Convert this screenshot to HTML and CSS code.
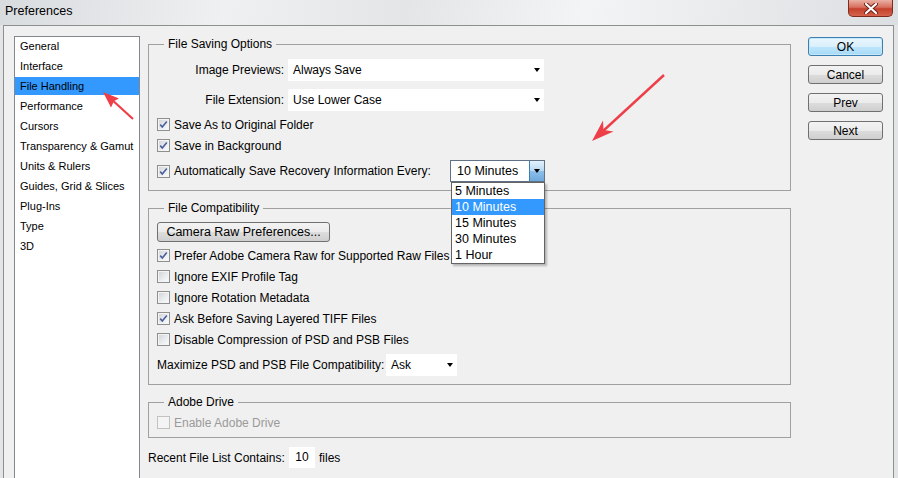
FILE: index.html
```html
<!DOCTYPE html>
<html lang="en">
<head>
    <meta charset="UTF-8" />
    <meta name="viewport" content="width=device-width, initial-scale=1.0" />
    <title>Preferences</title>
    <link rel="stylesheet" href="styles.css">
</head>
<body>
    <div class="titlebar">
        <span class="title">Preferences</span>
        <div class="close">
            <svg width="14" height="11" viewBox="0 0 14 11">
                <path d="M2 1 L12 10 M12 1 L2 10" stroke="#6b1e14" stroke-width="4" stroke-linecap="round" />
                <path d="M2 1 L12 10 M12 1 L2 10" stroke="#ffffff" stroke-width="2.2" stroke-linecap="round" />
            </svg>
        </div>
    </div>

    <div class="window">
        <ul class="categories">
            <li>General</li>
            <li>Interface</li>
            <li class="selected">File Handling</li>
            <li>Performance</li>
            <li>Cursors</li>
            <li>Transparency &amp; Gamut</li>
            <li>Units &amp; Rulers</li>
            <li>Guides, Grid &amp; Slices</li>
            <li>Plug-Ins</li>
            <li>Type</li>
            <li>3D</li>
        </ul>

        <div class="panel">
            <fieldset class="group">
                <legend>File Saving Options</legend>
                <div class="field first">
                    <span class="field-label">Image Previews:</span>
                    <div class="combo wide"><span>Always Save</span><span class="caret"></span></div>
                </div>
                <div class="field">
                    <span class="field-label">File Extension:</span>
                    <div class="combo wide"><span>Use Lower Case</span><span class="caret"></span></div>
                </div>
                <div class="check first-check"><span class="box checked"></span>Save As to Original Folder</div>
                <div class="check"><span class="box checked"></span>Save in Background</div>
                <div class="check auto">
                    <span class="box checked"></span>
                    <span class="auto-label">Automatically Save Recovery Information Every:</span>
                    <div class="dropdown">
                        <span class="dropdown-value">10 Minutes</span>
                        <span class="dropdown-button"><span class="caret"></span></span>
                        <ul class="dropdown-list">
                            <li>5 Minutes</li>
                            <li class="active">10 Minutes</li>
                            <li>15 Minutes</li>
                            <li>30 Minutes</li>
                            <li>1 Hour</li>
                        </ul>
                    </div>
                </div>
            </fieldset>

            <fieldset class="group">
                <legend>File Compatibility</legend>
                <button class="btn raw">Camera Raw Preferences...</button>
                <div class="check first-check"><span class="box checked"></span>Prefer Adobe Camera Raw for Supported Raw Files</div>
                <div class="check"><span class="box"></span>Ignore EXIF Profile Tag</div>
                <div class="check"><span class="box"></span>Ignore Rotation Metadata</div>
                <div class="check"><span class="box checked"></span>Ask Before Saving Layered TIFF Files</div>
                <div class="check"><span class="box"></span>Disable Compression of PSD and PSB Files</div>
                <div class="field maximize">
                    <span class="max-label">Maximize PSD and PSB File Compatibility:</span>
                    <div class="combo small"><span>Ask</span><span class="caret"></span></div>
                </div>
            </fieldset>

            <fieldset class="group drive">
                <legend>Adobe Drive</legend>
                <div class="check disabled"><span class="box"></span>Enable Adobe Drive</div>
            </fieldset>

            <div class="recent">
                <span class="recent-label">Recent File List Contains:</span>
                <span class="number">10</span>
                <span>files</span>
            </div>
        </div>

        <div class="actions">
            <button class="btn default">OK</button>
            <button class="btn">Cancel</button>
            <button class="btn">Prev</button>
            <button class="btn">Next</button>
        </div>
    </div>

    <svg class="annotations" width="898" height="478" viewBox="0 0 898 478">
        <line x1="133" y1="119" x2="110" y2="98" stroke="#ee3e48" stroke-width="2.2" />
        <polygon points="103,92 119,98.5 114,101 111,107.5" fill="#ee3e48" />
        <line x1="664" y1="75" x2="602" y2="132" stroke="#ee3e48" stroke-width="2.4" />
        <polygon points="592,141 603,120.5 603.5,130 613.5,131.5" fill="#ee3e48" />
    </svg>
</body>
</html>
```

FILE: styles.css
```css
:root {
    --fondo: #f0f0f0;
    --linea: #a0a0a0;
    --azul: #3399ff;
    --check: #3f5394;
}

body {
    margin: 0;
    width: 898px;
    height: 478px;
    overflow: hidden;
    position: relative;
    background: #e2e4e6;
    font-family: 'Liberation Sans', Arial, sans-serif;
    font-size: 12px;
    color: #000;
}

.titlebar {
    height: 25px;
    display: flex;
    justify-content: space-between;
    align-items: flex-start;
    background: linear-gradient(100deg, #d9dcdf 0%, #eef0f1 25%, #e3e5e7 45%, #f3f4f5 65%, #e6e8ea 85%, #dcdfe2 100%);
}

.title {
    padding: 4px 0 0 5px;
    line-height: 14px;
    font-size: 12.5px;
}

.close {
    width: 45px;
    height: 17px;
    margin-right: 5px;
    box-sizing: border-box;
    border: 1px solid #7e2a1f;
    border-top: none;
    border-radius: 0 0 5px 5px;
    background: linear-gradient(#eab0a4 0%, #d8705f 45%, #c3402c 55%, #d5644c 100%);
    display: flex;
    align-items: center;
    justify-content: center;
}

.window {
    width: 891px;
    height: 453px;
    margin-left: 3px;
    box-sizing: border-box;
    border: 1px solid #8e8f8f;
    border-bottom: none;
    background: var(--fondo);
    padding: 10px 0 0 10px;
    display: flex;
    align-items: flex-start;
}

.categories {
    width: 126px;
    height: 460px;
    flex-shrink: 0;
    box-sizing: border-box;
    margin: 0;
    padding: 0;
    list-style: none;
    background: #fff;
    border: 1px solid #828790;
    font-size: 11px;
}

    .categories li {
        height: 18px;
        line-height: 18px;
        margin-bottom: 2px;
        padding-left: 5px;
    }

    .categories .selected {
        background: var(--azul);
    }

.panel {
    width: 643px;
    margin-left: 8px;
    flex-shrink: 0;
}

.group {
    margin: 0;
    padding: 0 8px 8px 8px;
    border: 1px solid var(--linea);
    min-width: 0;
}

    .group + .group {
        margin-top: 9px;
    }

legend {
    margin-left: 7px;
    padding: 0 4px;
    line-height: 16px;
}

.field {
    display: flex;
    align-items: center;
    height: 22px;
    margin-top: 8px;
}

    .field.first {
        margin-top: 7px;
    }

.field-label {
    width: 127px;
    margin-right: 4px;
    text-align: right;
}

.combo {
    height: 22px;
    box-sizing: border-box;
    padding: 0 4px 0 5px;
    background: #fff;
    display: flex;
    align-items: center;
    justify-content: space-between;
}

    .combo.wide {
        width: 256px;
    }

    .combo.small {
        width: 71px;
    }

.caret {
    width: 0;
    height: 0;
    border-left: 3.5px solid transparent;
    border-right: 3.5px solid transparent;
    border-top: 4px solid #000;
}

.check {
    display: flex;
    align-items: center;
    height: 21px;
}

    .check.first-check {
        margin-top: 3px;
    }

.box {
    width: 13px;
    height: 13px;
    flex-shrink: 0;
    box-sizing: border-box;
    margin-right: 4px;
    border: 1px solid #8e8f8f;
    box-shadow: inset 0 0 0 1px #f4f4f4;
    background: linear-gradient(135deg, #cfd2d6 0%, #eceef0 60%, #fbfbfb 100%);
}

    .box.checked {
        background-image: url("data:image/svg+xml,%3Csvg xmlns='http://www.w3.org/2000/svg' width='11' height='11' viewBox='0 0 11 11'%3E%3Cpath d='M2.2 5.6 L4.3 8 L8.8 2.6' fill='none' stroke='%234a5f9c' stroke-width='1.6'/%3E%3C/svg%3E"), linear-gradient(135deg, #cfd2d6 0%, #eceef0 60%, #fbfbfb 100%);
    }

.check.auto {
    height: 22px;
    margin-top: 4px;
}

.auto-label {
    width: 276px;
}

.dropdown {
    position: relative;
    width: 95px;
    height: 22px;
    box-sizing: border-box;
    border: 1px solid #5f7286;
    background: #fff;
    display: flex;
    align-items: center;
    justify-content: space-between;
}

.dropdown-value {
    padding-left: 6px;
    font-size: 12.5px;
}

.dropdown-button {
    width: 15px;
    height: 20px;
    box-sizing: border-box;
    border-left: 1px solid #3c7fb1;
    background: linear-gradient(#e3f1fb 0%, #b6d8f3 50%, #8cc0ea 51%, #6fa9dc 100%);
    display: flex;
    align-items: center;
    justify-content: center;
}

.dropdown-list {
    position: absolute;
    top: 21px;
    left: 0;
    width: 92px;
    margin: 0;
    padding: 0;
    list-style: none;
    background: #fff;
    border: 1px solid #646464;
    box-shadow: 2px 2px 2px rgba(0,0,0,0.25);
    z-index: 2;
    font-size: 12.5px;
}

    .dropdown-list li {
        height: 16px;
        line-height: 16px;
        padding-left: 3px;
    }

    .dropdown-list .active {
        background: var(--azul);
        color: #fff;
    }

.btn {
    height: 19px;
    box-sizing: border-box;
    padding: 0;
    border: 1px solid #707070;
    border-radius: 3px;
    background: linear-gradient(#f3f3f3 0%, #ebebeb 50%, #dddddd 51%, #cfcfcf 100%);
    font-family: inherit;
    font-size: 12px;
    color: #000;
}

    .btn.raw {
        width: 173px;
        height: 20px;
        margin-top: 6px;
        display: block;
        font-size: 12.5px;
    }

    .btn.default {
        border-color: #3c7fb1;
        background: linear-gradient(#eaf6fd 0%, #d9f0fc 50%, #bee6fd 51%, #a7d9f5 100%);
        box-shadow: inset 0 0 0 1px #c5e7fa;
    }

.field.maximize {
    margin-top: 4px;
}

.max-label {
    width: 229px;
}

.drive {
    padding-bottom: 4px;
}

    .drive .check {
        margin-top: 2px;
    }

.check.disabled {
    color: #9a9a9a;
}

    .check.disabled .box {
        border-color: #c2c2c2;
        background: #f4f4f4;
    }

.recent {
    display: flex;
    align-items: center;
    height: 21px;
    margin-top: 9px;
}

.recent-label {
    width: 141px;
}

.number {
    width: 26px;
    height: 21px;
    line-height: 21px;
    margin-right: 4px;
    background: #fff;
    text-align: center;
}

.actions {
    width: 75px;
    margin-left: 17px;
    padding-top: 1px;
    display: flex;
    flex-direction: column;
    gap: 9px;
}

.annotations {
    position: absolute;
    top: 0;
    left: 0;
    pointer-events: none;
}
```
